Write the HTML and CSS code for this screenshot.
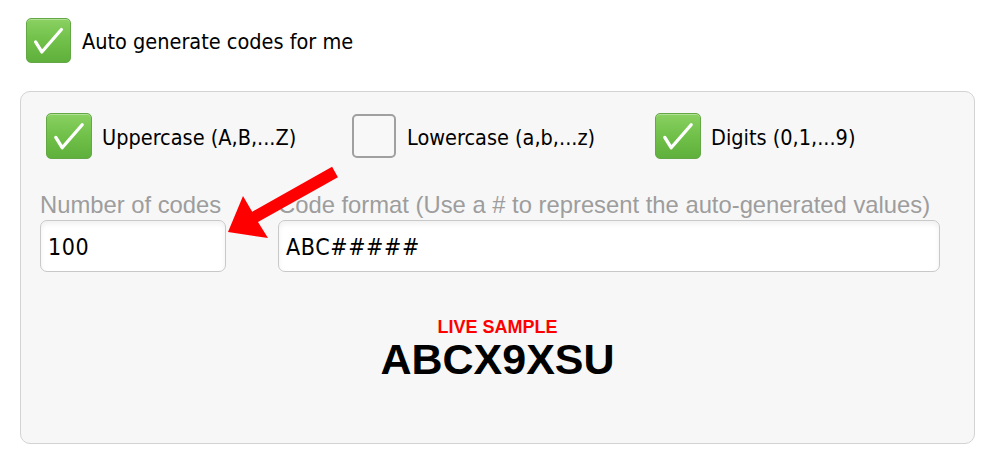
FILE: index.html
```html
<!DOCTYPE html>
<html>
<head>
<meta charset="utf-8">
<link rel="stylesheet" href="styles.css">
</head>
<body>
<div class="page">
  <div class="auto">
    <span class="cb on"><svg viewBox="0 0 45 45"><path d="M9 24 L15.5 34.5 L36 11"/></svg></span>
    <span class="cb-label">Auto generate codes for me</span>
  </div>

  <div class="panel">
    <div class="opts">
      <div class="opt">
        <span class="cb on"><svg viewBox="0 0 45 45"><path d="M9 24 L15.5 34.5 L36 11"/></svg></span>
        <span class="cb-label">Uppercase (A,B,...Z)</span>
      </div>
      <div class="opt">
        <span class="cb off"></span>
        <span class="cb-label">Lowercase (a,b,...z)</span>
      </div>
      <div class="opt">
        <span class="cb on"><svg viewBox="0 0 45 45"><path d="M9 24 L15.5 34.5 L36 11"/></svg></span>
        <span class="cb-label">Digits (0,1,...9)</span>
      </div>
    </div>

    <div class="fields">
      <div class="field f1">
        <div class="flabel">Number of codes</div>
        <div class="input">100</div>
      </div>
      <div class="field f2">
        <div class="flabel">Code format (Use a # to represent the auto-generated values)</div>
        <div class="input">ABC#####</div>
      </div>
    </div>

    <div class="sample">
      <div class="live">LIVE SAMPLE</div>
      <div class="code">ABCX9XSU</div>
    </div>
  </div>

  <svg class="arrow" viewBox="0 0 1000 463" width="1000" height="463">
    <polygon points="228,232 243,196 252.2,211.7 332.1,166.8 337.9,177.2 258,222.1 268,238" fill="#ff0000"/>
  </svg>
</div>
</body>
</html>
```

FILE: styles.css
```css
html, body {
  margin: 0;
  padding: 0;
  background: #ffffff;
}

.page {
  position: relative;
  width: 1000px;
  height: 463px;
  overflow: hidden;
  font-family: "DejaVu Sans Condensed", "DejaVu Sans", sans-serif;
  font-stretch: condensed;
  color: #000;
}

.auto {
  display: flex;
  align-items: center;
  gap: 11px;
  padding: 18px 0 0 26px;
  height: 45px;
}

.auto .cb {
  width: 45px;
  height: 45px;
}

.cb {
  box-sizing: border-box;
  display: inline-block;
  flex: none;
  width: 46px;
  height: 46px;
  border-radius: 5px;
}

.cb.on {
  background: linear-gradient(to bottom, #8ad162 0%, #70c049 50%, #5fb03c 100%);
  border: 1px solid #63a844;
  box-shadow: inset 0 1px 0 rgba(255,255,255,0.35);
}

.cb.on svg {
  display: block;
  width: 100%;
  height: 100%;
}

.cb.on svg path {
  fill: none;
  stroke: #ffffff;
  stroke-width: 3.4;
  stroke-linecap: round;
  stroke-linejoin: round;
}

.cb.off {
  width: 44px;
  height: 44px;
  margin: 1px;
  border: 2px solid #a0a0a0;
  background: #f8f8f8;
}

.cb-label {
  font-size: 21.5px;
  white-space: nowrap;
  padding-top: 2px;
}

.auto .cb-label {
  padding-top: 1px;
}

.panel {
  box-sizing: border-box;
  margin: 28px 0 0 20px;
  width: 955px;
  height: 353px;
  border: 1px solid #d3d3d3;
  border-radius: 10px;
  background: #f7f7f7;
  padding: 21px 19px 0 19px;
}

.opts {
  display: grid;
  grid-template-columns: 305px 304px auto;
  margin-left: 6px;
}

.opt {
  display: flex;
  align-items: center;
  gap: 10px;
}

.fields {
  display: flex;
  gap: 52px;
  margin-top: 32px;
}

.f1 { width: 186px; }
.f2 { width: 662px; }

.flabel {
  font-family: "Liberation Sans", Arial, sans-serif;
  font-stretch: normal;
  font-size: 23.8px;
  line-height: 28px;
  color: #9d9d9d;
  white-space: nowrap;
  margin-bottom: 1px;
}

.input {
  box-sizing: border-box;
  height: 52px;
  line-height: 52px;
  padding: 0 7px;
  background: #ffffff;
  border: 1px solid #c9c9c9;
  border-radius: 7px;
  box-shadow: inset 0 3px 5px rgba(0,0,0,0.06);
  font-size: 23px;
  letter-spacing: 0.6px;
}

.sample {
  margin-top: 45px;
  text-align: center;
  font-family: "Liberation Sans", Arial, sans-serif;
  font-stretch: normal;
  font-weight: bold;
}

.live {
  color: #ff0000;
  font-size: 18px;
  line-height: 20px;
}

.code {
  font-size: 43px;
  line-height: 44px;
  color: #000;
}

.arrow {
  position: absolute;
  left: 0;
  top: 0;
  pointer-events: none;
}
```
